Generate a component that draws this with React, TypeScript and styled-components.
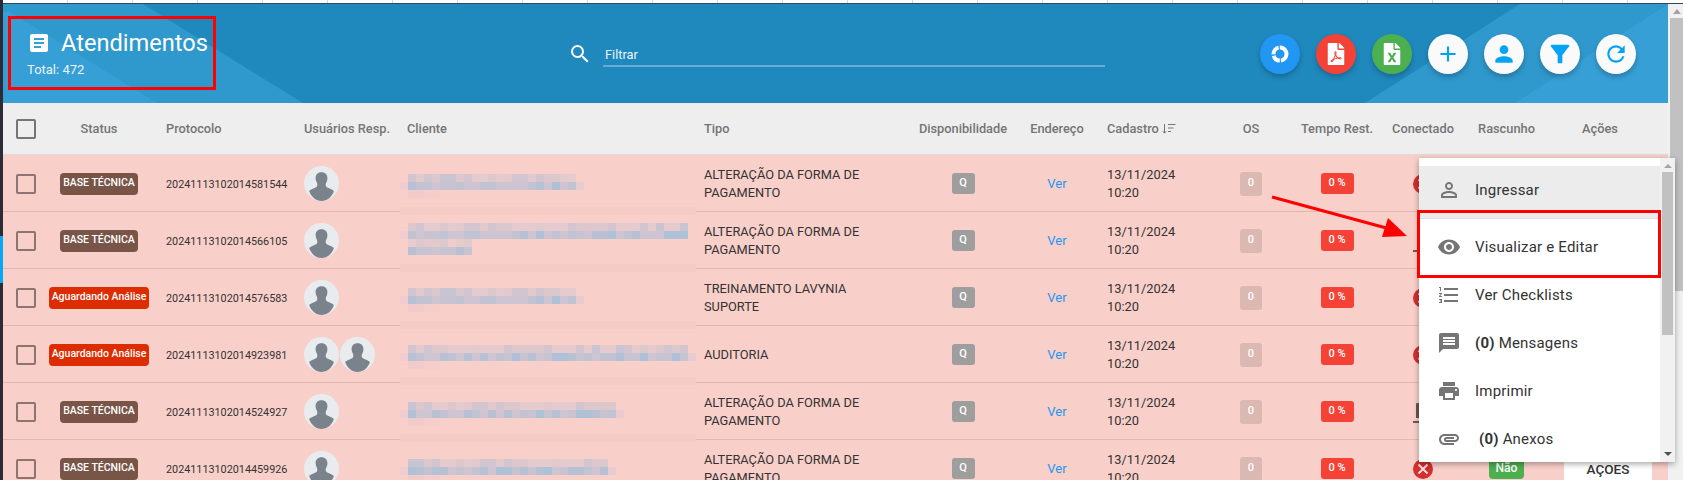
import { createGlobalStyle, styled } from "styled-components";
import {
  MdAdd,
  MdArticle,
  MdAttachment,
  MdFilterAlt,
  MdFormatListNumbered,
  MdMessage,
  MdPerson,
  MdPersonOutline,
  MdPrint,
  MdRefresh,
  MdSearch,
  MdVisibility,
} from "react-icons/md";
import { FaFileExcel, FaFilePdf } from "react-icons/fa";

type Row = {
  status: "base" | "analise";
  protocolo: string;
  users: number;
  tipo: string;
  conectado: "off" | "laptop" | "idle";
  blur: { top: number; cols: number; extra?: boolean; band: number };
};

const rows: Row[] = [
  { status: "base", protocolo: "20241113102014581544", users: 1, tipo: "ALTERAÇÃO DA FORMA DE PAGAMENTO", conectado: "off", blur: { top: 19, cols: 21, band: 52 } },
  { status: "base", protocolo: "20241113102014566105", users: 1, tipo: "ALTERAÇÃO DA FORMA DE PAGAMENTO", conectado: "idle", blur: { top: 11, cols: 35, extra: true, band: 52 } },
  { status: "analise", protocolo: "20241113102014576583", users: 1, tipo: "TREINAMENTO LAVYNIA SUPORTE", conectado: "off", blur: { top: 19, cols: 21, band: 52 } },
  { status: "analise", protocolo: "20241113102014923981", users: 2, tipo: "AUDITORIA", conectado: "off", blur: { top: 19, cols: 35, band: 51 } },
  { status: "base", protocolo: "20241113102014524927", users: 1, tipo: "ALTERAÇÃO DA FORMA DE PAGAMENTO", conectado: "laptop", blur: { top: 19, cols: 26, band: 51 } },
  { status: "base", protocolo: "20241113102014459926", users: 1, tipo: "ALTERAÇÃO DA FORMA DE PAGAMENTO", conectado: "off", blur: { top: 19, cols: 25, band: 60 } },
];

const pinkTones = ["#e6cbce", "#dcc7cd", "#d2c5cf", "#c9c4d1", "#e2c9cd"];
const blueTones = ["#cfc4d1", "#c1c2d2", "#b8c0d3", "#aec1d7", "#c8c3d1"];
const faintTones = ["#f5cdca", "#f0cbca", "#f7cec9"];

function pick(list: string[], seed: number) {
  const v = Math.sin(seed * 12.9898) * 43758.5453;
  return list[Math.floor((v - Math.floor(v)) * list.length)];
}

function BlurStrip({ top, cols, extra, band }: Row["blur"]) {
  const cells = [];
  for (let i = 0; i < cols; i++) {
    cells.push(<rect key={"a" + i} x={8 + i * 8} y={top} width="8" height="8" fill={pick(pinkTones, top + i + cols)} />);
    cells.push(<rect key={"b" + i} x={8 + i * 8} y={top + 8} width="8" height="8" fill={pick(blueTones, top + i * 3 + cols)} />);
  }
  cells.push(<rect key="l" x="0" y={top + 8} width="8" height="8" fill="#f0cbcf" />);
  if (!extra) cells.push(<rect key="r" x={8 + cols * 8} y={top + 8} width="8" height="8" fill="#e8cbce" />);
  for (let i = 0; i < 4; i++) {
    cells.push(<rect key={"f" + i} x={8 + i * 8} y={top + 16} width="8" height="8" fill={pick(faintTones, i + 5)} />);
  }
  if (extra) {
    for (let i = 0; i < 8; i++) {
      cells.push(<rect key={"p" + i} x={8 + i * 8} y={top + 16} width="8" height="8" fill={pick(pinkTones, i + 2)} opacity="0.6" />);
      cells.push(<rect key={"q" + i} x={8 + i * 8} y={top + 24} width="8" height="8" fill={pick(blueTones, i + 9)} />);
    }
  }
  return (
    <Mosaic width="296" height="68">
      {cells}
      {band < 60 && <rect x="0" y={band} width="296" height="8" fill="#f5cbc5" />}
    </Mosaic>
  );
}

function Avatar() {
  return (
    <AvatarSvg viewBox="0 0 32 34" preserveAspectRatio="none">
      <ellipse cx="16" cy="17" rx="16" ry="17" fill="#e9ecef" />
      <path
        d="M16 6c-3.6 0-5.6 2.6-5.4 6.2.1 1.4.4 2.4.9 3.4.5 1.1.8 2.2.6 3.6-.2 1.2-1.4 1.8-3.4 2.6-1.7.7-3.2 1.4-4 2.6C6.7 30.400 11 34 16 34s9.300-3.600 11.300-9.500c-.8-1.200-2.300-1.900-4-2.600-2-.8-3.200-1.400-3.400-2.600-.2-1.400.1-2.500.6-3.600.5-1 .8-2 .9-3.400C21.600 8.600 19.600 6 16 6z"
        fill="#7a838c"
      />
    </AvatarSvg>
  );
}

function Donut() {
  return (
    <svg width="18" height="18" viewBox="0 0 18 18">
      <circle cx="9" cy="9" r="6.500" fill="none" stroke="#fff" strokeWidth="4" strokeDasharray="9 1.200 8 1.200 9 1.200 11 1.200" />
    </svg>
  );
}

function Laptop({ bare }: { bare?: boolean }) {
  return (
    <LaptopSvg viewBox="0 0 24 24">
      {!bare && <path d="M6 1h12a1 1 0 011 1v14H5V2a1 1 0 011-1z" fill="#6b5550" />}
      <path d="M2 19h20v2H2z" fill="#6b5a58" />
    </LaptopSvg>
  );
}

const Global = createGlobalStyle`
  html, body {
    margin: 0;
    padding: 0;
    height: 480px;
    overflow: hidden;
    background: #fff;
    font-family: Roboto, "Liberation Sans", sans-serif;
  }
`;

const Page = styled.div`
  position: relative;
  width: 1683px;
  height: 480px;
  display: flex;
  overflow: hidden;
`;

const Rail = styled.div`
  width: 3px;
  flex: none;
  display: flex;
  flex-direction: column;
  background: #2c2c38;
  padding-top: 236px;
  box-sizing: border-box;
`;

const RailMark = styled.div`
  height: 47px;
  background: #03a9f4;
`;

const Content = styled.div`
  flex: 1;
  min-width: 0;
  display: flex;
  flex-direction: column;
`;

const TopStrip = styled.div`
  height: 3px;
  flex: none;
  background: repeating-linear-gradient(90deg, #fff 0 64px, #d6d6d6 64px 65px);
  border-bottom: 1px solid #2b4a5e;
`;

const Body = styled.div`
  flex: 1;
  display: flex;
  min-height: 0;
`;

const Main = styled.div`
  width: 1665px;
  flex: none;
  display: flex;
  flex-direction: column;
`;

const Header = styled.header`
  position: relative;
  height: 99px;
  flex: none;
  display: flex;
  align-items: center;
  background: #1f88bd;
  overflow: hidden;
`;

const Stripes = styled.svg`
  position: absolute;
  left: 0;
  top: 0;
`;

const TitleBlock = styled.div`
  position: relative;
  width: 565px;
  flex: none;
  padding: 0 0 2px 24px;
  box-sizing: border-box;
  color: #fff;
`;

const TitleRow = styled.div`
  display: flex;
  align-items: center;
  gap: 10px;
  font-size: 23.6px;
  line-height: 30px;
  svg {
    font-size: 24px;
  }
`;

const Total = styled.div`
  font-size: 13px;
  line-height: 16px;
  margin-top: 4px;
  color: #eaf5fb;
`;

const Search = styled.div`
  position: relative;
  display: flex;
  align-items: center;
  gap: 11px;
  color: #fff;
  svg {
    font-size: 24px;
    margin-top: 1px;
  }
`;

const SearchField = styled.div`
  width: 502px;
  height: 24px;
  line-height: 24px;
  font-size: 12.8px;
  padding-left: 2px;
  box-sizing: border-box;
  color: #e8f4fa;
  border-bottom: 2px solid #64aed5;
  margin-top: 2px;
`;

const Actions = styled.div`
  position: relative;
  margin-left: auto;
  padding-right: 32px;
  display: flex;
  gap: 16px;
`;

const Fab = styled.div<{ $bg: string; $color: string }>`
  width: 40px;
  height: 40px;
  border-radius: 50%;
  display: flex;
  align-items: center;
  justify-content: center;
  background: ${({ $bg }) => $bg};
  color: ${({ $color }) => $color};
  box-shadow: 0 3px 5px rgba(0, 0, 0, 0.22);
  font-size: 26px;
`;

const columns = "44px 104px 153px 103px 297px 196px 126px 62px 112px 102px 70px 102px 65px 122px 7px";

const HeadRow = styled.div`
  height: 52px;
  flex: none;
  box-sizing: border-box;
  display: grid;
  grid-template-columns: ${columns};
  align-items: center;
  background: #eeeeee;
  border-bottom: 1px solid #dcdcdc;
  font-size: 12.8px;
  font-weight: 500;
  color: #757575;
  white-space: nowrap;
`;

const TableRow = styled.div`
  height: 57px;
  flex: none;
  box-sizing: border-box;
  padding-top: 1px;
  display: grid;
  grid-template-columns: ${columns};
  align-items: center;
  background: #f9cfc9;
  border-bottom: 1px solid #deb9b4;
  font-size: 12.8px;
  color: #333;
`;

const Cell = styled.div<{ $center?: boolean; $pad?: number }>`
  text-align: ${({ $center }) => ($center ? "center" : "left")};
  padding-left: ${({ $pad }) => $pad ?? 0}px;
  min-width: 0;
  display: ${({ $center }) => ($center ? "flex" : "block")};
  justify-content: center;
  align-items: center;
`;

const ClientCell = styled.div`
  position: relative;
  align-self: stretch;
`;

const Mosaic = styled.svg`
  position: absolute;
  left: -7px;
  top: -1px;
  z-index: 1;
`;

const CheckBox = styled.div<{ $head?: boolean }>`
  width: 20px;
  height: 20px;
  box-sizing: border-box;
  margin-left: 13px;
  border-radius: 2px;
  border: 2px solid ${({ $head }) => ($head ? "#757575" : "#8e7470")};
`;

const StatusBadge = styled.div<{ $kind: Row["status"] }>`
  height: 22px;
  line-height: 20px;
  box-sizing: border-box;
  padding: 0 3px;
  border-radius: 4px;
  font-size: 10.5px;
  font-weight: 500;
  color: #fff;
  white-space: nowrap;
  background: ${({ $kind }) => ($kind === "base" ? "#795548" : "#dd2c00")};
`;

const Protocol = styled.span`
  font-size: 10.8px;
`;

const Users = styled.div`
  display: flex;
  gap: 1px;
`;

const AvatarSvg = styled.svg`
  width: 35px;
  height: 35px;
`;

const TypeText = styled.div`
  line-height: 18px;
  max-width: 180px;
`;

const SmallBadge = styled.div<{ $bg: string; $w: number; $h: number }>`
  width: ${({ $w }) => $w}px;
  height: ${({ $h }) => $h}px;
  line-height: ${({ $h }) => $h - 2}px;
  border-radius: 3px;
  background: ${({ $bg }) => $bg};
  color: #fff;
  font-size: 11px;
  font-weight: 500;
  text-align: center;
`;

const VerLink = styled.span`
  color: #2196f3;
  font-size: 13px;
`;

const DateText = styled.div`
  line-height: 18px;
`;

const OffIcon = styled.div`
  width: 20px;
  height: 20px;
  border-radius: 50%;
  background: #d32f2f;
  display: flex;
  align-items: center;
  justify-content: center;
`;

const LaptopSvg = styled.svg`
  width: 24px;
  height: 24px;
  margin-top: 4px;
`;

const NaoBadge = styled.div`
  width: 35px;
  height: 21px;
  line-height: 20px;
  border-radius: 4px;
  background: #4caf50;
  color: #fff;
  font-size: 12px;
  font-weight: 500;
  text-align: center;
`;

const ActionButton = styled.div`
  width: 88px;
  height: 36px;
  line-height: 36px;
  margin-left: 16px;
  background: #fff;
  color: #333;
  font-size: 13.5px;
  font-weight: 500;
  text-align: center;
`;

const FakeScroll = styled.div`
  flex: 1;
  position: relative;
  background: #f1f1f1;
  padding: 14px 0 0 2px;
  box-sizing: border-box;
`;

const ScrollUp = styled.div`
  position: absolute;
  top: 5px;
  left: 5px;
  border: 4px solid transparent;
  border-top: 0;
  border-bottom: 5px solid #a3a3a3;
`;

const ScrollThumb = styled.div`
  height: 273px;
  background: #c1c1c1;
`;

const Menu = styled.div`
  position: absolute;
  z-index: 3;
  left: 1419px;
  top: 158px;
  width: 256px;
  height: 304px;
  display: flex;
  background: #fff;
  box-shadow: 0 2px 6px rgba(0, 0, 0, 0.35);
`;

const MenuList = styled.div`
  flex: 1;
  padding-top: 8px;
`;

const MenuItem = styled.div<{ $h: number; $active?: boolean; $nudge?: number; $divider?: boolean; $indent?: number }>`
  height: ${({ $h }) => $h}px;
  box-sizing: border-box;
  display: flex;
  align-items: center;
  padding-left: 18px;
  padding-top: ${({ $nudge }) => Math.max($nudge ?? 0, 0)}px;
  padding-bottom: ${({ $nudge }) => Math.max(-($nudge ?? 0), 0)}px;
  background: ${({ $active }) => ($active ? "#ececec" : "#fff")};
  border-top: ${({ $divider }) => ($divider ? "1px solid #e0e0e0" : "none")};
  color: #333;
  font-size: 15px;
  letter-spacing: 0.2px;
  svg {
    width: 24px;
    height: 24px;
    flex: none;
    color: #757575;
    margin-right: ${({ $indent }) => 14 + ($indent ?? 0)}px;
  }
  b {
    font-weight: 700;
  }
`;

const MenuScroll = styled.div`
  width: 15px;
  flex: none;
  position: relative;
  background: #f1f1f1;
  padding: 14px 2px 0;
  box-sizing: border-box;
`;

const MenuThumb = styled.div`
  height: 163px;
  background: #c1c1c1;
`;

const MenuArrowUp = styled.div`
  position: absolute;
  top: 6px;
  left: 4px;
  border: 4px solid transparent;
  border-top: 0;
  border-bottom: 4px solid #a3a3a3;
`;

const MenuArrowDown = styled.div`
  position: absolute;
  bottom: 6px;
  left: 4px;
  border: 4px solid transparent;
  border-bottom: 0;
  border-top: 4px solid #505050;
`;

const Highlight = styled.div<{ $x: number; $y: number; $w: number; $h: number }>`
  position: absolute;
  z-index: 4;
  left: ${({ $x }) => $x}px;
  top: ${({ $y }) => $y}px;
  width: ${({ $w }) => $w}px;
  height: ${({ $h }) => $h}px;
  box-sizing: border-box;
  border: 3px solid #f00;
`;

const ArrowMark = styled.svg`
  position: absolute;
  z-index: 4;
  left: 1265px;
  top: 190px;
`;

export default function App() {
  return (
    <Page>
      <Global />
      <Rail>
        <RailMark />
      </Rail>
      <Content>
        <TopStrip />
        <Body>
          <Main>
            <Header>
              <Stripes width="1665" height="99">
                <polygon points="0,0 140,0 300,99 0,99" fill="#2f98cd" />
                <polygon points="7,8 154,99 0,99 0,8" fill="#369fd5" />
                <polygon points="1517,0 1665,0 1665,99 1362,99" fill="#2f98cd" />
                <polygon points="1665,0 1665,99 1512,99" fill="#369fd5" />
              </Stripes>
              <TitleBlock>
                <TitleRow>
                  <MdArticle />
                  Atendimentos
                </TitleRow>
                <Total>Total: 472</Total>
              </TitleBlock>
              <Search>
                <MdSearch />
                <SearchField>Filtrar</SearchField>
              </Search>
              <Actions>
                <Fab $bg="#2196f3" $color="#fff">
                  <Donut />
                </Fab>
                <Fab $bg="#f44336" $color="#fff">
                  <FaFilePdf size={22} />
                </Fab>
                <Fab $bg="#4caf50" $color="#fff">
                  <FaFileExcel size={22} />
                </Fab>
                <Fab $bg="#fafafa" $color="#03a4f4">
                  <MdAdd />
                </Fab>
                <Fab $bg="#fafafa" $color="#03a4f4">
                  <MdPerson />
                </Fab>
                <Fab $bg="#fafafa" $color="#03a4f4">
                  <MdFilterAlt size={28} />
                </Fab>
                <Fab $bg="#fafafa" $color="#03a4f4">
                  <MdRefresh />
                </Fab>
              </Actions>
            </Header>
            <HeadRow>
              <CheckBox $head />
              <Cell $center>Status</Cell>
              <Cell $pad={15}>Protocolo</Cell>
              <Cell>Usuários Resp.</Cell>
              <Cell>Cliente</Cell>
              <Cell>Tipo</Cell>
              <Cell $center>Disponibilidade</Cell>
              <Cell $center>Endereço</Cell>
              <Cell $pad={19}>
                Cadastro{" "}
                <svg width="14" height="12" viewBox="0 0 14 12" style={{ verticalAlign: -2 }}>
                  <path d="M2.500 1v9M.8 8.200l1.700 2 1.700-2M6 1.500h7.500M6 5h5.500M6 8.500h3" fill="none" stroke="#757575" strokeWidth="1" />
                </svg>
              </Cell>
              <Cell $center>OS</Cell>
              <Cell $center>Tempo Rest.</Cell>
              <Cell $center>Conectado</Cell>
              <Cell $center>Rascunho</Cell>
              <Cell $center>Ações</Cell>
            </HeadRow>
            {rows.map((row, index) => (
              <TableRow key={row.protocolo}>
                <CheckBox />
                <Cell $center>
                  <StatusBadge $kind={row.status}>{row.status === "base" ? "BASE TÉCNICA" : "Aguardando Análise"}</StatusBadge>
                </Cell>
                <Cell $pad={15}>
                  <Protocol>{row.protocolo}</Protocol>
                </Cell>
                <Users>
                  {Array.from({ length: row.users }, (_, i) => (
                    <Avatar key={i} />
                  ))}
                </Users>
                <ClientCell>
                  <BlurStrip {...row.blur} />
                </ClientCell>
                <TypeText>{row.tipo}</TypeText>
                <Cell $center>
                  <SmallBadge $bg="#9e9e9e" $w={23} $h={21}>
                    Q
                  </SmallBadge>
                </Cell>
                <Cell $center>
                  <VerLink>Ver</VerLink>
                </Cell>
                <Cell $pad={19}>
                  <DateText>
                    13/11/2024
                    <br />
                    10:20
                  </DateText>
                </Cell>
                <Cell $center>
                  <SmallBadge $bg="#dbb8b2" $w={22} $h={24}>
                    0
                  </SmallBadge>
                </Cell>
                <Cell $center>
                  <SmallBadge $bg="#f44336" $w={33} $h={21}>
                    0 %
                  </SmallBadge>
                </Cell>
                <Cell $center>
                  {row.conectado === "off" ? (
                    <OffIcon>
                      <svg width="12" height="12" viewBox="0 0 12 12">
                        <path d="M1.500 1.500l9 9M10.500 1.500l-9 9" stroke="#f5dede" strokeWidth="2" />
                      </svg>
                    </OffIcon>
                  ) : (
                    <Laptop bare={row.conectado === "idle"} />
                  )}
                </Cell>
                {/* nas outras linhas fica tudo atras do menu */}
                <Cell $center>{index === rows.length - 1 && <NaoBadge>Não</NaoBadge>}</Cell>
                <Cell $center>{index === rows.length - 1 && <ActionButton>AÇOES</ActionButton>}</Cell>
                <div />
              </TableRow>
            ))}
          </Main>
          <FakeScroll>
            <ScrollUp />
            <ScrollThumb />
          </FakeScroll>
        </Body>
      </Content>
      <Menu>
        <MenuList>
          <MenuItem $h={52} $active $nudge={-4}>
            <MdPersonOutline />
            Ingressar
          </MenuItem>
          <MenuItem $h={53} $nudge={4} $divider>
            <MdVisibility />
            Visualizar e Editar
          </MenuItem>
          <MenuItem $h={48}>
            <MdFormatListNumbered />
            Ver Checklists
          </MenuItem>
          <MenuItem $h={48}>
            <MdMessage />
            <span>
              <b>(0)</b> Mensagens
            </span>
          </MenuItem>
          <MenuItem $h={48}>
            <MdPrint />
            Imprimir
          </MenuItem>
          <MenuItem $h={47} $indent={4}>
            <MdAttachment />
            <span>
              <b>(0)</b> Anexos
            </span>
          </MenuItem>
        </MenuList>
        <MenuScroll>
          <MenuArrowUp />
          <MenuThumb />
          <MenuArrowDown />
        </MenuScroll>
      </Menu>
      <Highlight $x={8} $y={16} $w={208} $h={74} />
      <Highlight $x={1417} $y={210} $w={244} $h={68} />
      <ArrowMark width="150" height="60" viewBox="0 0 150 60">
        <path d="M7 7L125 39" stroke="#f00" strokeWidth="3" />
        <polygon points="142,46 117,47 123,28" fill="#f00" />
      </ArrowMark>
    </Page>
  );
}
